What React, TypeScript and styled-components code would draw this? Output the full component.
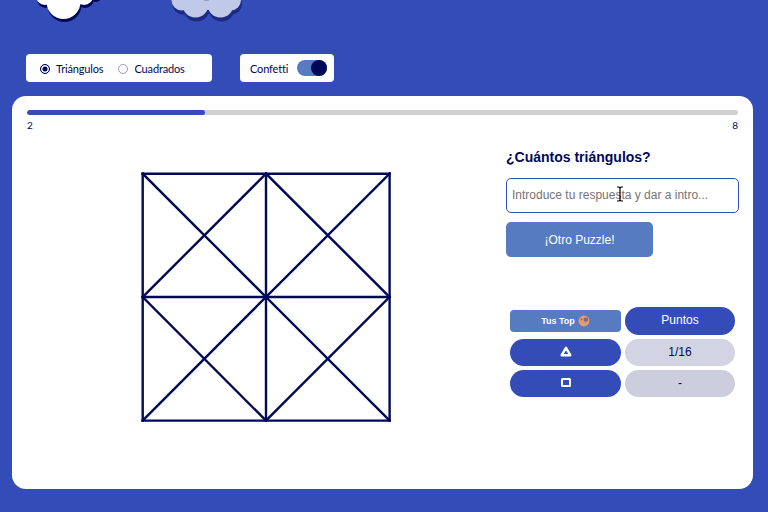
import React from "react";
import styled, { createGlobalStyle } from "styled-components";

const Global = createGlobalStyle`
  html, body { margin: 0; padding: 0; width: 768px; height: 512px; overflow: hidden; background: #344cb7; }
  * { box-sizing: border-box; }
`;

const Page = styled.div`
  width: 768px;
  height: 512px;
  background: #344cb7;
  display: flex;
  flex-direction: column;
  overflow: hidden;
`;

const CloudRow = styled.div`
  height: 22px;
  padding-left: 30px;
  display: flex;
  gap: 55px;
`;

const CloudIcon = styled.svg`
  display: block;
  flex: none;
`;

const CloudLabel = styled.text`
  font: 12px "Lato", sans-serif;
  fill: #8d93b8;
`;

const Controls = styled.div`
  margin-top: 32px;
  padding-left: 26px;
  display: flex;
  gap: 28px;
`;

const ControlCard = styled.div<{ $width: number }>`
  width: ${(p) => p.$width}px;
  height: 28px;
  background: #fff;
  border-radius: 4px;
  display: flex;
  align-items: center;
  color: #000957;
  font: 11px "Lato", sans-serif;
  letter-spacing: -0.15px;
`;

const RadioGroup = styled(ControlCard)`
  padding-left: 14px;
`;

const ToggleGroup = styled(ControlCard)`
  padding-left: 10px;
  gap: 10px;
`;

const RadioOption = styled.span<{ $gap: number }>`
  display: flex;
  align-items: center;
  gap: 6px;
  margin-right: ${(p) => p.$gap}px;
`;

const RadioDot = styled.span<{ $on?: boolean }>`
  width: 10px;
  height: 10px;
  margin-top: 1px;
  border-radius: 50%;
  border: 1px solid ${(p) => (p.$on ? "#000957" : "#9a9ab5")};
  background: ${(p) => (p.$on ? "#000957" : "#fff")};
  box-shadow: ${(p) => (p.$on ? "inset 0 0 0 1.5px #fff" : "none")};
`;

const Toggle = styled.span`
  width: 30px;
  height: 16px;
  margin-left: -1px;
  border-radius: 8px;
  background: #577bc1;
  display: flex;
  justify-content: flex-end;
`;

const Knob = styled.span`
  width: 16px;
  height: 16px;
  border-radius: 50%;
  background: #000957;
`;

const Card = styled.main`
  margin: 14px 15px 0 12px;
  height: 393px;
  background: #fff;
  border-radius: 14px;
  padding: 14px 14px 0 15px;
`;

const Track = styled.div`
  height: 5px;
  margin-right: 1px;
  border-radius: 3px;
  background: #d0d0d0;
  overflow: hidden;
`;

const Fill = styled.div`
  height: 100%;
  background: #344cb7;
  border-radius: 3px;
`;

const Scale = styled.div`
  margin: 4px 1px 0 0;
  display: flex;
  justify-content: space-between;
  color: #000957;
  font: 10px/12px "Lato", sans-serif;
`;

const Body = styled.div`
  margin-top: 17px;
  display: flex;
`;

const PuzzlePane = styled.div`
  width: 479px;
  padding: 24px 0 0 114px;
`;

const PuzzleSvg = styled.svg`
  display: block;
`;

const Side = styled.aside`
  width: 233px;
  font-family: "Liberation Sans", Arial, sans-serif;
`;

const Question = styled.h2`
  margin: 0;
  font: bold 14px/18px "Liberation Sans", Arial, sans-serif;
  color: #000957;
`;

const AnswerWrap = styled.div`
  position: relative;
  margin-top: 12px;
`;

const Answer = styled.input`
  display: block;
  width: 233px;
  height: 35px;
  border: 1px solid #344cb7;
  border-radius: 5px;
  padding: 0 5px 2px;
  outline: none;
  background: #fff;
  font: 12px "Liberation Sans", Arial, sans-serif;
  &::placeholder { color: #757575; opacity: 1; }
`;

const Caret = styled.svg`
  position: absolute;
  left: 110px;
  top: 8px;
`;

const PuzzleButton = styled.button`
  display: block;
  margin-top: 9px;
  width: 147px;
  height: 35px;
  border: 0;
  border-radius: 5px;
  background: #577bc1;
  color: #fff;
  font: 12px "Liberation Sans", Arial, sans-serif;
`;

const ScoreGrid = styled.div`
  margin: 50px 0 0 4px;
  width: 225px;
  display: grid;
  grid-template-columns: 111px 110px;
  grid-auto-rows: auto;
  gap: 4px;
  align-items: center;
`;

const TopTab = styled.div`
  height: 22px;
  border-radius: 4px;
  background: #577bc1;
  color: #fff;
  font: bold 9px "Liberation Sans", Arial, sans-serif;
  display: flex;
  align-items: center;
  justify-content: center;
  gap: 3px;
`;

const Emoji = styled.svg`
  display: block;
`;

const Pill = styled.div<{ $h: number; $tone: "blue" | "light" | "grey" }>`
  height: ${(p) => p.$h}px;
  padding-bottom: 2px;
  border-radius: 14px;
  display: flex;
  align-items: center;
  justify-content: center;
  font-size: 12px;
  color: ${(p) => (p.$tone === "blue" ? "#fff" : "#000957")};
  background: ${(p) => (p.$tone === "blue" ? "#344cb7" : p.$tone === "light" ? "#d3d4e3" : "#cccedd")};
`;

type Lobe = [number, number, number];

const WHITE_LOBES: Lobe[] = [[15, -4, 9], [33.5, 2, 17], [54, -4, 9], [42, -8, 12], [25, -8, 12], [65, -6, 5]];
const BLUE_LOBES: Lobe[] = [[17, 0, 10.5], [30.5, 4.5, 13], [55.5, 4.5, 13], [65.5, 0, 10.5], [43, -5, 15]];

function Cloud({ lobes, fill, shadow, dy, label }: { lobes: Lobe[]; fill: string; shadow: string; dy: number; label?: string }) {
  return (
    <CloudIcon width="80" height="24" viewBox="0 0 80 24">
      <g fill={shadow} transform={`translate(1 ${dy})`}>
        {lobes.map(([cx, cy, r], i) => <circle key={i} cx={cx} cy={cy} r={r} />)}
      </g>
      <g fill={fill}>
        {lobes.map(([cx, cy, r], i) => <circle key={i} cx={cx} cy={cy} r={r} />)}
      </g>
      {label && <CloudLabel x="25" y="-1">{label}</CloudLabel>}
    </CloudIcon>
  );
}

function Puzzle() {
  const a = 1.7;
  const m = 125;
  const b = 248.6;
  const lines: number[][] = [
    [a, a, b, a], [a, m, b, m], [a, b, b, b],
    [a, a, a, b], [m, a, m, b], [b, a, b, b],
    [a, a, m, m], [m, a, a, m], [m, a, b, m], [b, a, m, m],
    [a, m, m, b], [m, m, a, b], [m, m, b, b], [b, m, m, b],
  ];
  return (
    <PuzzleSvg width="250" height="250" viewBox="0 0 250 250">
      {lines.map(([x1, y1, x2, y2], i) => (
        <line key={i} x1={x1} y1={y1} x2={x2} y2={y2} stroke="#000957" strokeWidth="2.4" strokeLinecap="square" />
      ))}
    </PuzzleSvg>
  );
}

export default function App() {
  return (
    <Page>
      <Global />
      <CloudRow>
        <Cloud lobes={WHITE_LOBES} fill="#fff" shadow="#000957" dy={3} />
        <Cloud lobes={BLUE_LOBES} fill="#c0cae8" shadow="#1d2a85" dy={4} label="English" />
      </CloudRow>
      <Controls>
        <RadioGroup $width={186}>
          <RadioOption $gap={15}><RadioDot $on />Triángulos</RadioOption>
          <RadioOption $gap={0}><RadioDot />Cuadrados</RadioOption>
        </RadioGroup>
        <ToggleGroup $width={94}>
          Confetti
          <Toggle><Knob /></Toggle>
        </ToggleGroup>
      </Controls>
      <Card>
        <Track><Fill style={{ width: "25%" }} /></Track>
        <Scale><span>2</span><span>8</span></Scale>
        <Body>
          <PuzzlePane><Puzzle /></PuzzlePane>
          <Side>
            <Question>¿Cuántos triángulos?</Question>
            <AnswerWrap>
              <Answer placeholder="Introduce tu respuesta y dar a intro..." />
              <Caret width="8" height="16" viewBox="0 0 8 16">
                <path d="M1 1h2l1 1 1-1h2M4 2v12M1 15h2l1-1 1 1h2" fill="none" stroke="#000" strokeWidth="1.2" />
              </Caret>
            </AnswerWrap>
            <PuzzleButton>¡Otro Puzzle!</PuzzleButton>
            <ScoreGrid>
              <TopTab>
                Tus Top
                <Emoji width="12" height="12" viewBox="0 0 11 11">
                  <circle cx="5.5" cy="5.5" r="5" fill="#e39a78" />
                  <circle cx="7.2" cy="4.2" r="2" fill="#7b6a7a" />
                  <circle cx="3.2" cy="4" r="1" fill="#a8705c" />
                </Emoji>
              </TopTab>
              <Pill $h={28} $tone="blue">Puntos</Pill>
              <Pill $h={27} $tone="blue">
                <svg width="12" height="11" viewBox="0 0 12 11">
                  <path d="M6 1.8 L10.3 9.2 H1.7 Z" fill="none" stroke="#fff" strokeWidth="2.4" strokeLinejoin="round" />
                </svg>
              </Pill>
              <Pill $h={27} $tone="light">1/16</Pill>
              <Pill $h={27} $tone="blue">
                <svg width="10" height="9" viewBox="0 0 10 9">
                  <rect x="1" y="1" width="8" height="7" rx="0.5" fill="none" stroke="#fff" strokeWidth="2" />
                </svg>
              </Pill>
              <Pill $h={27} $tone="grey">-</Pill>
            </ScoreGrid>
          </Side>
        </Body>
      </Card>
    </Page>
  );
}
